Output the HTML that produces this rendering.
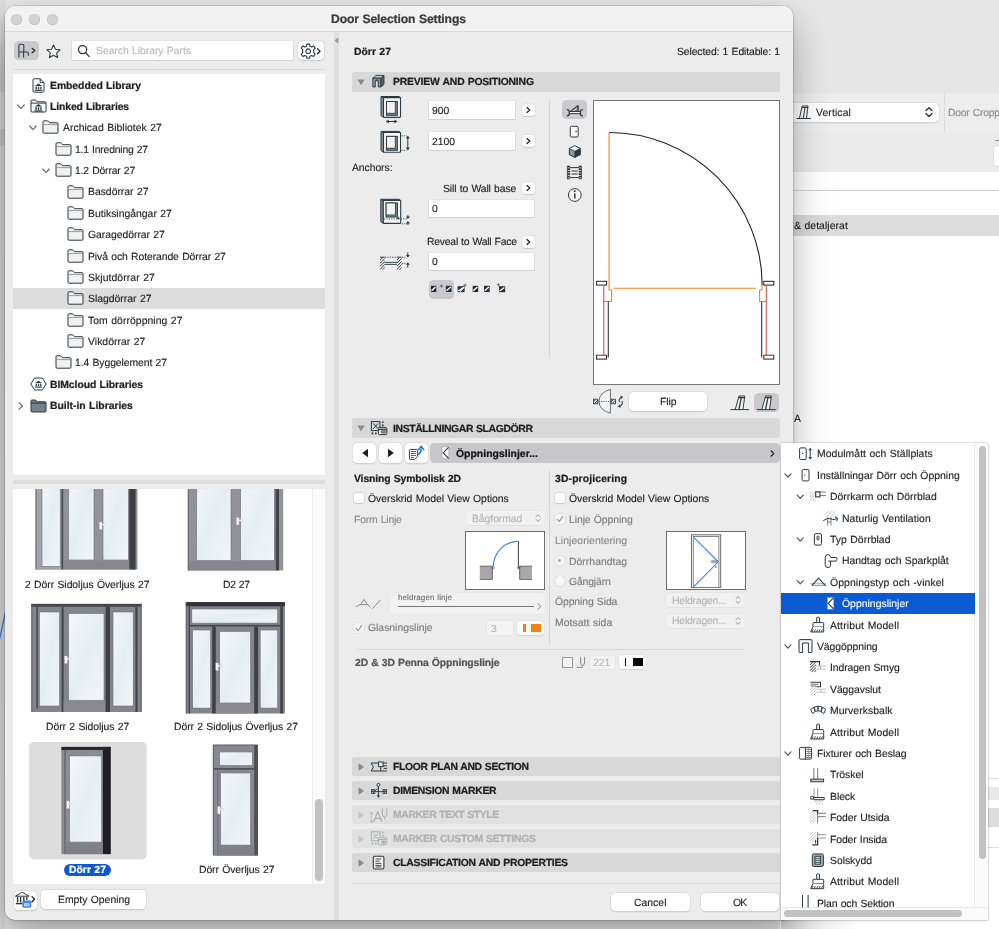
<!DOCTYPE html>
<html lang="sv">
<head>
<meta charset="utf-8">
<title>Door Selection Settings</title>
<style>
html,body{margin:0;padding:0;}
body{width:999px;height:929px;overflow:hidden;position:relative;background:#e5e5e5;-webkit-font-smoothing:antialiased;text-rendering:geometricPrecision;
 font-family:"Liberation Sans","DejaVu Sans",sans-serif;font-size:10.4px;color:#222;}
.a{position:absolute;}
.t{position:absolute;white-space:nowrap;line-height:14px;height:14px;will-change:transform;-webkit-text-stroke:.13px currentColor;}
.b{font-weight:bold;-webkit-text-stroke:.22px currentColor;}
svg{position:absolute;overflow:visible;}
.tl{position:absolute;width:11px;height:11px;border-radius:6px;background:#d3d3d3;box-shadow:inset 0 0 0 .5px #bdbdbd;top:13.5px;}
.sec{position:absolute;left:352px;width:427.5px;height:19.5px;background:#d8d8d8;border-radius:2.5px;}
.sec2{background:#e1e1e1;}
.fld{position:absolute;background:#fff;box-shadow:0 0 0 .5px #dadada,0 .5px 0 .5px #c9c9c9;}
.btn{position:absolute;background:#fff;border-radius:4.5px;box-shadow:0 0 0 .5px #d2d2d2,0 .5px 1.5px rgba(0,0,0,.22);}
.sb{position:absolute;background:#fdfdfd;border-radius:4px;box-shadow:0 0 0 .5px #dcdcdc,0 .5px 1px rgba(0,0,0,.2);}
.cb{position:absolute;width:10px;height:10px;background:#fff;border-radius:2.5px;box-shadow:0 0 0 .5px #c4c4c4,0 .5px 1px rgba(0,0,0,.15);}
.cbd{background:#f4f4f4;box-shadow:0 0 0 .5px #d6d6d6;}
.dd{position:absolute;background:#f1f1f1;border-radius:4px;box-shadow:0 0 0 .5px #dfdfdf,0 .5px .5px rgba(0,0,0,.08);}
.pv{position:absolute;background:#fff;border:1px solid #777;box-sizing:border-box;}
</style>
</head>
<body>
<!-- background application -->
<div class="a" style="left:780.0px;top:0.0px;width:219.0px;height:93.0px;background:#e6e6e6"></div>
<div class="a" style="left:780.0px;top:93.0px;width:219.0px;height:39.0px;background:#ededed"></div>
<div class="a" style="left:780.0px;top:132.0px;width:219.0px;height:40.0px;background:#ebebeb"></div>
<div class="a" style="left:780.0px;top:172.0px;width:219.0px;height:757.0px;background:#fff"></div>
<div class="a" style="left:780.0px;top:190.0px;width:219.0px;height:1.0px;background:#d4d4d4"></div>
<div class="a" style="left:780.0px;top:215.0px;width:219.0px;height:21.0px;background:#dcdcdc"></div>
<div class="a" style="left:760.0px;top:102.5px;width:179.0px;height:19.0px;background:#fff;border-radius:5px;box-shadow:0 0 0 .5px #d9d9d9,0 .5px 1.5px rgba(0,0,0,.2)"></div>
<div class="a" style="left:944.0px;top:93.0px;width:1.0px;height:39.0px;background:#dcdcdc"></div>
<div class="t" style="left:816.0px;top:107.0px;letter-spacing:0.11px;color:#262626">Vertical</div>
<div class="t" style="left:948.0px;top:107.0px;letter-spacing:-0.23px;word-spacing:0.5px;color:#8c8c8c">Door Cropp</div>
<div class="t" style="left:794.0px;top:220.0px;letter-spacing:0.07px;word-spacing:0.5px;color:#1e1e1e">&amp; detaljerat</div>
<div class="t" style="left:793.5px;top:413.0px;letter-spacing:0.00px;color:#1e1e1e">A</div>
<svg style="left:924.0px;top:106.0px" width="10" height="12" viewBox="0 0 10 12"><path d="M2 4.6 L5 1.8 L8 4.6 M2 7.6 L5 10.4 L8 7.6" fill="none" stroke="#333" stroke-width="1.4" stroke-linecap="round" stroke-linejoin="round"/></svg>
<svg style="left:796.0px;top:103.0px" width="16" height="18" viewBox="0 0 16 18"><path d="M0.5 15.5 H15 M3.5 15 L6.2 3 H12 L10.5 15 M7.3 15 L9 4.5 M6 4.5 H11.8" fill="none" stroke="#2b3a42" stroke-width="1"/></svg>
<div class="a" style="left:995.0px;top:140.0px;width:4.0px;height:1.0px;background:#999"></div>
<div class="a" style="left:994.0px;top:146.0px;width:5.0px;height:20.0px;background:#fff;border-radius:4px 0 0 4px;box-shadow:0 0 0 .5px #d0d0d0"></div>
<div class="a" style="left:988.0px;top:778.0px;width:11.0px;height:1.0px;background:#dedede"></div>
<div class="a" style="left:988.0px;top:786.5px;width:11.0px;height:13.0px;background:#e9e9e9"></div>
<div class="a" style="left:988.0px;top:807.5px;width:11.0px;height:19.0px;background:#dcdcdc"></div>
<div class="a" style="left:988.0px;top:847.0px;width:11.0px;height:1.0px;background:#dedede"></div>
<div class="a" style="left:0.0px;top:0.0px;width:5.0px;height:929.0px;background:linear-gradient(#dedede 0,#d2d2d2 40px,#c6c6c6 70px,#c6c6c6 92px,#d3d3d3 92px,#d3d3d3 129px,#c2c2c2 129px,#c2c2c2 146px,#d4d4d4 146px,#d8d8d8 600px,#dadada 929px)"></div>
<svg style="left:0.0px;top:608.0px" width="6" height="36" viewBox="0 0 6 36"><path d="M-1 34 L5.5 4" stroke="#3d7fd6" stroke-width="1.3" fill="none"/></svg>
<!-- dialog window -->
<div class="a" style="left:5.0px;top:6.0px;width:788.0px;height:914.0px;background:#ececec;border-radius:10px;box-shadow:0 0 0 .5px rgba(0,0,0,.22),0 17px 38px 0 rgba(0,0,0,.30),0 2px 6px rgba(0,0,0,.10)"></div>
<div class="a" style="left:5.0px;top:6.0px;width:788.0px;height:25.5px;background:#f2f2f2;border-radius:10px 10px 0 0;border-bottom:1px solid #d9d9d9;box-sizing:border-box"></div>
<div class="tl" style="left:11.2px"></div>
<div class="tl" style="left:28.9px"></div>
<div class="tl" style="left:46.7px"></div>
<div class="t b" style="left:331.0px;top:11.0px;font-size:12.2px;line-height:16px;height:16px;letter-spacing:-0.16px;word-spacing:0.5px;color:#3a3a3a">Door Selection Settings</div>
<div class="a" style="left:333.5px;top:31.5px;width:5.8px;height:888.5px;background:#dfdfdf"></div>
<svg style="left:334.2px;top:36.8px" width="5" height="7" viewBox="0 0 5 7"><path d="M4.4 0.3 L0.4 3.5 L4.4 6.7 Z" fill="#9c9c9c"/></svg>
<!-- left pane -->
<div class="a" style="left:14.0px;top:40.5px;width:25.0px;height:19.5px;background:#cacace;border-radius:4.5px"></div>
<svg style="left:0.0px;top:0.0px" width="40" height="62" viewBox="0 0 40 62"><path d="M18.9 57.6 V45.6 Q18.9 44.2 20.3 44.2 H22.4 Q23.8 44.2 23.8 45.6 V52 H27.2 Q28.3 52 28.3 53.1 V55.8 M18.9 52 H23.8 M23.6 52.2 V57.6" fill="none" stroke="#2b3a42" stroke-width="1.1" stroke-linejoin="round"/><path d="M32.2 48.4 L34.8 50.6 L32.2 52.8" fill="none" stroke="#222" stroke-width="1.3" stroke-linecap="round" stroke-linejoin="round"/></svg>
<svg style="left:46.0px;top:43.5px" width="15" height="15" viewBox="0 0 15 15"><path d="M7.5 1 L9.45 5.3 L14.1 5.8 L10.6 8.95 L11.6 13.55 L7.5 11.2 L3.4 13.55 L4.4 8.95 L.9 5.8 L5.55 5.3 Z" fill="#fff" stroke="#2b3a42" stroke-width="1.1" stroke-linejoin="round"/></svg>
<div class="a" style="left:72.0px;top:41.0px;width:221.0px;height:18.5px;background:#fff;border-radius:1px;box-shadow:0 0 0 .5px #dcdcdc,0 .5px 0 .5px #c8c8c8"></div>
<svg style="left:77.0px;top:43.5px" width="14" height="14" viewBox="0 0 14 14"><circle cx="5.6" cy="5.6" r="4.1" fill="none" stroke="#333" stroke-width="1.25"/><path d="M8.6 8.8 L12 12.4" stroke="#333" stroke-width="1.35" stroke-linecap="round"/></svg>
<div class="t" style="left:96.0px;top:45.0px;letter-spacing:-0.04px;word-spacing:0.5px;color:#b9b9b9">Search Library Parts</div>
<div class="a" style="left:298.0px;top:41.0px;width:26.0px;height:18.5px;background:#fdfdfd;border-radius:4.5px;box-shadow:0 0 0 .5px #d4d4d4,0 .5px 1.5px rgba(0,0,0,.2)"></div>
<svg style="left:300.0px;top:41.5px" width="22" height="18" viewBox="0 0 22 18"><g transform="translate(8.2 9.2) scale(1.18)" fill="none" stroke="#2b3a42" stroke-width=".95"><circle r="2" /><path d="M-1.1 -6 H1.1 L1.5 -4.3 L2.9 -3.6 L4.5 -4.5 L5.9 -2.6 L4.7 -1.3 V1.3 L5.9 2.6 L4.5 4.5 L2.9 3.6 L1.5 4.3 L1.1 6 H-1.1 L-1.5 4.3 L-2.9 3.6 L-4.5 4.5 L-5.9 2.6 L-4.7 1.3 V-1.3 L-5.9 -2.6 L-4.5 -4.5 L-2.9 -3.6 L-1.5 -4.3 Z" stroke-linejoin="round"/></g><path d="M17.4 6.6 L20 9.2 L17.4 11.8" fill="none" stroke="#222" stroke-width="1.3" stroke-linecap="round" stroke-linejoin="round"/></svg>
<div class="a" style="left:13.0px;top:68.5px;width:312.0px;height:1.0px;background:#dadada"></div>
<div class="a" style="left:13.0px;top:74.0px;width:312.0px;height:401.0px;background:#fff"></div>
<svg style="left:32.0px;top:77.5px" width="13" height="15" viewBox="0 0 13 15"><path d="M1 2 Q1 .8 2.2 .8 H8.2 L12 4.6 V13 Q12 14.2 10.8 14.2 H2.2 Q1 14.2 1 13 Z M8.2 .8 V4.6 H12" fill="#fff" stroke="#2b3a42" stroke-width="1" stroke-linejoin="round"/><g transform="translate(6.5 9.2) scale(1.02)" fill="#2b3a42"><path d="M-3.6 -1.2 L0 -3.6 L3.6 -1.2 Z"/><rect x="-3" y="-.6" width="1.3" height="2.6"/><rect x="-.65" y="-.6" width="1.3" height="2.6"/><rect x="1.7" y="-.6" width="1.3" height="2.6"/><rect x="-3.8" y="2.4" width="7.6" height="1.2"/></g></svg>
<div class="t b" style="left:50.0px;top:80.0px;letter-spacing:-0.05px;word-spacing:0.5px;color:#1d1d1d">Embedded Library</div>
<svg style="left:29.5px;top:99.4px" width="17" height="14" viewBox="0 0 17 14"><path d="M1 12 V2 Q1 1 2 1 H5.6 L7 2.8 H15 Q16 2.8 16 3.8 V12 Q16 13 15 13 H2 Q1 13 1 12 Z M1 4.1 H16" fill="#fff" stroke="#2b3a42" stroke-width="1"/><g transform="translate(8.5 8.8) scale(1.05)" fill="#2b3a42"><path d="M-3.6 -1.2 L0 -3.6 L3.6 -1.2 Z"/><rect x="-3" y="-.6" width="1.3" height="2.6"/><rect x="-.65" y="-.6" width="1.3" height="2.6"/><rect x="1.7" y="-.6" width="1.3" height="2.6"/><rect x="-3.8" y="2.4" width="7.6" height="1.2"/></g></svg>
<svg style="left:16.5px;top:103.9px" width="8" height="6" viewBox="0 0 8 6"><path d="M0.8 1 L4 4.6 L7.2 1" fill="none" stroke="#6d6d6d" stroke-width="1.2" stroke-linecap="round" stroke-linejoin="round"/></svg>
<div class="t b" style="left:50.0px;top:101.0px;letter-spacing:-0.11px;word-spacing:0.5px;color:#1d1d1d">Linked Libraries</div>
<svg style="left:42.0px;top:120.3px" width="17" height="14" viewBox="0 0 17 14"><path d="M1 12.2 V1.8 Q1 .8 2 .8 H5.4 Q6.2 .8 6.8 1.6 L7.6 2.7 H15 Q16 2.7 16 3.7 V12.2 Q16 13.2 15 13.2 H2 Q1 13.2 1 12.2 Z" fill="#f1f1f1" stroke="#2b3a42" stroke-width="1"/><path d="M1.4 4.6 H15.6" stroke="#7d878d" stroke-width=".8"/></svg>
<svg style="left:29.0px;top:125.2px" width="8" height="6" viewBox="0 0 8 6"><path d="M0.8 1 L4 4.6 L7.2 1" fill="none" stroke="#6d6d6d" stroke-width="1.2" stroke-linecap="round" stroke-linejoin="round"/></svg>
<div class="t" style="left:62.5px;top:122.0px;letter-spacing:0.04px;word-spacing:0.5px;color:#1d1d1d">Archicad Bibliotek 27</div>
<svg style="left:54.5px;top:141.7px" width="17" height="14" viewBox="0 0 17 14"><path d="M1 12.2 V1.8 Q1 .8 2 .8 H5.4 Q6.2 .8 6.8 1.6 L7.6 2.7 H15 Q16 2.7 16 3.7 V12.2 Q16 13.2 15 13.2 H2 Q1 13.2 1 12.2 Z" fill="#f1f1f1" stroke="#2b3a42" stroke-width="1"/><path d="M1.4 4.6 H15.6" stroke="#7d878d" stroke-width=".8"/></svg>
<div class="t" style="left:75.0px;top:144.0px;letter-spacing:-0.20px;word-spacing:0.5px;color:#1d1d1d">1.1 Inredning 27</div>
<svg style="left:54.5px;top:163.1px" width="17" height="14" viewBox="0 0 17 14"><path d="M1 12.2 V1.8 Q1 .8 2 .8 H5.4 Q6.2 .8 6.8 1.6 L7.6 2.7 H15 Q16 2.7 16 3.7 V12.2 Q16 13.2 15 13.2 H2 Q1 13.2 1 12.2 Z" fill="#f1f1f1" stroke="#2b3a42" stroke-width="1"/><path d="M1.4 4.6 H15.6" stroke="#7d878d" stroke-width=".8"/></svg>
<svg style="left:41.5px;top:168.0px" width="8" height="6" viewBox="0 0 8 6"><path d="M0.8 1 L4 4.6 L7.2 1" fill="none" stroke="#6d6d6d" stroke-width="1.2" stroke-linecap="round" stroke-linejoin="round"/></svg>
<div class="t" style="left:75.0px;top:165.0px;letter-spacing:-0.17px;word-spacing:0.5px;color:#1d1d1d">1.2 Dörrar 27</div>
<svg style="left:67.0px;top:184.5px" width="17" height="14" viewBox="0 0 17 14"><path d="M1 12.2 V1.8 Q1 .8 2 .8 H5.4 Q6.2 .8 6.8 1.6 L7.6 2.7 H15 Q16 2.7 16 3.7 V12.2 Q16 13.2 15 13.2 H2 Q1 13.2 1 12.2 Z" fill="#f1f1f1" stroke="#2b3a42" stroke-width="1"/><path d="M1.4 4.6 H15.6" stroke="#7d878d" stroke-width=".8"/></svg>
<div class="t" style="left:87.5px;top:186.0px;letter-spacing:-0.01px;word-spacing:0.5px;color:#1d1d1d">Basdörrar 27</div>
<svg style="left:67.0px;top:205.8px" width="17" height="14" viewBox="0 0 17 14"><path d="M1 12.2 V1.8 Q1 .8 2 .8 H5.4 Q6.2 .8 6.8 1.6 L7.6 2.7 H15 Q16 2.7 16 3.7 V12.2 Q16 13.2 15 13.2 H2 Q1 13.2 1 12.2 Z" fill="#f1f1f1" stroke="#2b3a42" stroke-width="1"/><path d="M1.4 4.6 H15.6" stroke="#7d878d" stroke-width=".8"/></svg>
<div class="t" style="left:87.5px;top:208.0px;letter-spacing:0.01px;word-spacing:0.5px;color:#1d1d1d">Butiksingångar 27</div>
<svg style="left:67.0px;top:227.2px" width="17" height="14" viewBox="0 0 17 14"><path d="M1 12.2 V1.8 Q1 .8 2 .8 H5.4 Q6.2 .8 6.8 1.6 L7.6 2.7 H15 Q16 2.7 16 3.7 V12.2 Q16 13.2 15 13.2 H2 Q1 13.2 1 12.2 Z" fill="#f1f1f1" stroke="#2b3a42" stroke-width="1"/><path d="M1.4 4.6 H15.6" stroke="#7d878d" stroke-width=".8"/></svg>
<div class="t" style="left:87.5px;top:229.0px;letter-spacing:-0.03px;word-spacing:0.5px;color:#1d1d1d">Garagedörrar 27</div>
<svg style="left:67.0px;top:248.6px" width="17" height="14" viewBox="0 0 17 14"><path d="M1 12.2 V1.8 Q1 .8 2 .8 H5.4 Q6.2 .8 6.8 1.6 L7.6 2.7 H15 Q16 2.7 16 3.7 V12.2 Q16 13.2 15 13.2 H2 Q1 13.2 1 12.2 Z" fill="#f1f1f1" stroke="#2b3a42" stroke-width="1"/><path d="M1.4 4.6 H15.6" stroke="#7d878d" stroke-width=".8"/></svg>
<div class="t" style="left:87.5px;top:251.0px;letter-spacing:-0.08px;word-spacing:0.5px;color:#1d1d1d">Pivå och Roterande Dörrar 27</div>
<svg style="left:67.0px;top:269.9px" width="17" height="14" viewBox="0 0 17 14"><path d="M1 12.2 V1.8 Q1 .8 2 .8 H5.4 Q6.2 .8 6.8 1.6 L7.6 2.7 H15 Q16 2.7 16 3.7 V12.2 Q16 13.2 15 13.2 H2 Q1 13.2 1 12.2 Z" fill="#f1f1f1" stroke="#2b3a42" stroke-width="1"/><path d="M1.4 4.6 H15.6" stroke="#7d878d" stroke-width=".8"/></svg>
<div class="t" style="left:87.5px;top:272.0px;letter-spacing:0.08px;word-spacing:0.5px;color:#1d1d1d">Skjutdörrar 27</div>
<div class="a" style="left:13.0px;top:288.0px;width:312.0px;height:21.4px;background:#dcdcdc"></div>
<svg style="left:67.0px;top:291.3px" width="17" height="14" viewBox="0 0 17 14"><path d="M1 12.2 V1.8 Q1 .8 2 .8 H5.4 Q6.2 .8 6.8 1.6 L7.6 2.7 H15 Q16 2.7 16 3.7 V12.2 Q16 13.2 15 13.2 H2 Q1 13.2 1 12.2 Z" fill="#f1f1f1" stroke="#2b3a42" stroke-width="1"/><path d="M1.4 4.6 H15.6" stroke="#7d878d" stroke-width=".8"/></svg>
<div class="t" style="left:87.5px;top:293.0px;letter-spacing:-0.00px;word-spacing:0.5px;color:#1d1d1d">Slagdörrar 27</div>
<svg style="left:67.0px;top:312.7px" width="17" height="14" viewBox="0 0 17 14"><path d="M1 12.2 V1.8 Q1 .8 2 .8 H5.4 Q6.2 .8 6.8 1.6 L7.6 2.7 H15 Q16 2.7 16 3.7 V12.2 Q16 13.2 15 13.2 H2 Q1 13.2 1 12.2 Z" fill="#f1f1f1" stroke="#2b3a42" stroke-width="1"/><path d="M1.4 4.6 H15.6" stroke="#7d878d" stroke-width=".8"/></svg>
<div class="t" style="left:87.5px;top:315.0px;letter-spacing:0.06px;word-spacing:0.5px;color:#1d1d1d">Tom dörröppning 27</div>
<svg style="left:67.0px;top:334.0px" width="17" height="14" viewBox="0 0 17 14"><path d="M1 12.2 V1.8 Q1 .8 2 .8 H5.4 Q6.2 .8 6.8 1.6 L7.6 2.7 H15 Q16 2.7 16 3.7 V12.2 Q16 13.2 15 13.2 H2 Q1 13.2 1 12.2 Z" fill="#f1f1f1" stroke="#2b3a42" stroke-width="1"/><path d="M1.4 4.6 H15.6" stroke="#7d878d" stroke-width=".8"/></svg>
<div class="t" style="left:87.5px;top:336.0px;letter-spacing:0.04px;word-spacing:0.5px;color:#1d1d1d">Vikdörrar 27</div>
<svg style="left:54.5px;top:355.4px" width="17" height="14" viewBox="0 0 17 14"><path d="M1 12.2 V1.8 Q1 .8 2 .8 H5.4 Q6.2 .8 6.8 1.6 L7.6 2.7 H15 Q16 2.7 16 3.7 V12.2 Q16 13.2 15 13.2 H2 Q1 13.2 1 12.2 Z" fill="#f1f1f1" stroke="#2b3a42" stroke-width="1"/><path d="M1.4 4.6 H15.6" stroke="#7d878d" stroke-width=".8"/></svg>
<div class="t" style="left:75.0px;top:357.0px;letter-spacing:-0.08px;word-spacing:0.5px;color:#1d1d1d">1.4 Byggelement 27</div>
<svg style="left:29.5px;top:377.2px" width="17" height="14" viewBox="0 0 17 14"><path d="M4.6 1 H12.4 L16.2 7 L12.4 13 H4.6 L.8 7 Z" fill="#fff" stroke="#2b3a42" stroke-width="1" stroke-linejoin="round"/><g transform="translate(8.5 7.2) scale(0.95)" fill="#2b3a42"><path d="M-3.6 -1.2 L0 -3.6 L3.6 -1.2 Z"/><rect x="-3" y="-.6" width="1.3" height="2.6"/><rect x="-.65" y="-.6" width="1.3" height="2.6"/><rect x="1.7" y="-.6" width="1.3" height="2.6"/><rect x="-3.8" y="2.4" width="7.6" height="1.2"/></g></svg>
<div class="t b" style="left:50.0px;top:379.0px;letter-spacing:-0.06px;word-spacing:0.5px;color:#1d1d1d">BIMcloud Libraries</div>
<svg style="left:29.5px;top:398.6px" width="17" height="14" viewBox="0 0 17 14"><path d="M1 12 V2 Q1 1 2 1 H5.6 L7 2.8 H15 Q16 2.8 16 3.8 V12 Q16 13 15 13 H2 Q1 13 1 12 Z" fill="#77828a" stroke="#2b3a42" stroke-width="1"/><path d="M1 4.1 H16" stroke="#2b3a42" stroke-width="1"/></svg>
<svg style="left:18.0px;top:401.6px" width="6" height="8" viewBox="0 0 6 8"><path d="M1 0.8 L4.6 4 L1 7.2" fill="none" stroke="#6d6d6d" stroke-width="1.2" stroke-linecap="round" stroke-linejoin="round"/></svg>
<div class="t b" style="left:50.0px;top:400.0px;letter-spacing:-0.01px;word-spacing:0.5px;color:#1d1d1d">Built-in Libraries</div>
<div class="a" style="left:13.0px;top:479.5px;width:312.0px;height:4.5px;background:#dddddd"></div>
<div class="a" style="left:13.0px;top:488.5px;width:312.0px;height:395.0px;background:#fff"></div>
<div class="a" style="left:312.0px;top:488.5px;width:1.0px;height:395.0px;background:#ececec"></div>
<div class="a" style="left:313.0px;top:488.5px;width:12.0px;height:395.0px;background:#fafafa"></div>
<div class="a" style="left:314.5px;top:798.5px;width:8.0px;height:82.5px;background:#c2c2c2;border-radius:4px"></div>
<!-- thumbnails -->
<svg width="0" height="0" style="left:0;top:0"><defs>
<linearGradient id="gl" x1="0" y1="0" x2="1" y2="1"><stop offset="0" stop-color="#f4f7f9"/><stop offset=".5" stop-color="#e6edf1"/><stop offset="1" stop-color="#f1f5f7"/></linearGradient>
<linearGradient id="fr" x1="0" y1="0" x2="1" y2="0"><stop offset="0" stop-color="#8f8f97"/><stop offset="1" stop-color="#7d7d86"/></linearGradient>
</defs></svg>
<div class="a" style="left:13px;top:488.5px;width:299px;height:395px;overflow:hidden"><svg style="left:0;top:0" width="299" height="395" viewBox="0 0 299 395"><rect x="22.6" y="-18.5" width="101.9" height="99.0" fill="#92929a"/><rect x="22.6" y="-18.5" width="26.4" height="99.0" fill="#a2a2aa"/><rect x="116.2" y="-18.5" width="6.4" height="99.0" fill="#3e3e45"/><rect x="22.6" y="-18.5" width="1.0" height="99.0" fill="#6e6e76"/><rect x="29.0" y="-18.5" width="18.2" height="96.0" fill="url(#gl)" stroke="#6f6f78" stroke-width=".6"/><rect x="48.4" y="-18.5" width="1.8" height="99.0" fill="#4a4a51"/><rect x="55.6" y="-18.5" width="25.4" height="89.5" fill="url(#gl)" stroke="#6f6f78" stroke-width=".6"/><rect x="90.0" y="-18.5" width="25.4" height="89.5" fill="url(#gl)" stroke="#6f6f78" stroke-width=".6"/><rect x="50.2" y="71.5" width="66.0" height="9.0" fill="#86868e"/><rect x="86.4" y="33.0" width="2.6" height="7.4" fill="#fff" stroke="#b4b4b8" stroke-width=".4"/><rect x="88.0" y="35.0" width="4.6" height="1.5" fill="#f2f2f2" stroke="#c2c2c6" stroke-width=".3"/><rect x="174.8" y="-18.5" width="95.4" height="100.0" fill="#92929a"/><rect x="262.6" y="-18.5" width="3.4" height="100.0" fill="#44444b"/><rect x="174.8" y="-18.5" width="1.2" height="100.0" fill="#6e6e76"/><rect x="183.7" y="-18.5" width="34.3" height="90.0" fill="url(#gl)" stroke="#6f6f78" stroke-width=".6"/><rect x="227.6" y="-18.5" width="33.7" height="90.0" fill="url(#gl)" stroke="#6f6f78" stroke-width=".6"/><rect x="176.0" y="72.1" width="86.6" height="9.4" fill="#86868e"/><rect x="223.4" y="28.5" width="2.6" height="7.4" fill="#fff" stroke="#b4b4b8" stroke-width=".4"/><rect x="225.0" y="30.5" width="4.6" height="1.5" fill="#f2f2f2" stroke="#c2c2c6" stroke-width=".3"/><rect x="18.4" y="114.9" width="110.2" height="108.1" fill="#84848c"/><rect x="18.4" y="114.9" width="110.2" height="2.8" fill="#45454c"/><rect x="18.4" y="114.9" width="1.0" height="108.1" fill="#5e5e66"/><rect x="23.4" y="117.7" width="1.4" height="101.8" fill="#45454c"/><rect x="122.4" y="117.7" width="2.2" height="105.3" fill="#45454c"/><rect x="127.6" y="114.9" width="1.0" height="108.1" fill="#5e5e66"/><rect x="26.5" y="123.0" width="20.1" height="94.0" fill="url(#gl)" stroke="#6f6f78" stroke-width=".6"/><rect x="48.6" y="117.7" width="2.0" height="105.3" fill="#45454c"/><rect x="55.6" y="124.5" width="35.4" height="87.0" fill="url(#gl)" stroke="#6f6f78" stroke-width=".6"/><rect x="50.6" y="212.1" width="42.0" height="10.9" fill="#8a8a92"/><rect x="92.6" y="117.7" width="4.4" height="105.3" fill="#3e3e45"/><rect x="100.0" y="123.0" width="20.2" height="94.0" fill="url(#gl)" stroke="#6f6f78" stroke-width=".6"/><rect x="51.6" y="167.0" width="2.6" height="7.4" fill="#fff" stroke="#b4b4b8" stroke-width=".4"/><rect x="53.2" y="169.0" width="4.6" height="1.5" fill="#f2f2f2" stroke="#c2c2c6" stroke-width=".3"/><rect x="172.8" y="113.1" width="99.1" height="111.4" fill="#84848c"/><rect x="172.8" y="113.1" width="99.1" height="4.2" fill="#34343a"/><rect x="172.8" y="113.1" width="1.0" height="111.4" fill="#5e5e66"/><rect x="175.6" y="117.3" width="1.4" height="107.2" fill="#45454c"/><rect x="267.2" y="117.3" width="2.8" height="107.2" fill="#45454c"/><rect x="178.8" y="120.0" width="85.9" height="14.1" fill="url(#gl)" stroke="#6f6f78" stroke-width=".6"/><rect x="177.0" y="135.9" width="90.2" height="1.6" fill="#45454c"/><rect x="179.7" y="141.0" width="18.0" height="78.1" fill="url(#gl)" stroke="#6f6f78" stroke-width=".6"/><rect x="199.2" y="137.5" width="3.6" height="87.0" fill="#3e3e45"/><rect x="206.7" y="142.5" width="30.9" height="71.5" fill="url(#gl)" stroke="#6f6f78" stroke-width=".6"/><rect x="202.8" y="214.5" width="38.4" height="10.0" fill="#8a8a92"/><rect x="241.2" y="137.5" width="3.8" height="87.0" fill="#3e3e45"/><rect x="247.2" y="141.0" width="17.5" height="78.1" fill="url(#gl)" stroke="#6f6f78" stroke-width=".6"/><rect x="202.8" y="174.0" width="2.6" height="7.4" fill="#fff" stroke="#b4b4b8" stroke-width=".4"/><rect x="204.4" y="176.0" width="4.6" height="1.5" fill="#f2f2f2" stroke="#c2c2c6" stroke-width=".3"/><rect x="16.0" y="253.1" width="117.7" height="117.4" rx="5" fill="#dddddd"/><rect x="48.4" y="257.9" width="49.3" height="107.2" fill="#8a8a92"/><rect x="89.6" y="257.9" width="8.1" height="107.2" fill="#1e1e23"/><rect x="48.4" y="257.9" width="49.3" height="3.2" fill="#26262b"/><rect x="51.6" y="261.1" width="1.0" height="104.0" fill="#4a4a50"/><rect x="52.6" y="261.1" width="37.0" height="104.0" fill="#8c8c94"/><rect x="56.5" y="266.9" width="32.2" height="86.2" fill="url(#gl)" stroke="#6f6f78" stroke-width=".6"/><rect x="52.6" y="353.7" width="37.0" height="11.4" fill="#7f7f87"/><rect x="53.6" y="312.0" width="2.6" height="7.4" fill="#fff" stroke="#b4b4b8" stroke-width=".4"/><rect x="55.2" y="314.0" width="4.6" height="1.5" fill="#f2f2f2" stroke="#c2c2c6" stroke-width=".3"/><rect x="199.8" y="255.5" width="45.0" height="111.0" fill="#5a5a61"/><rect x="200.8" y="256.5" width="40.6" height="110.0" fill="#888890"/><rect x="241.4" y="256.5" width="3.4" height="110.0" fill="#4c4c53"/><rect x="206.7" y="263.0" width="32.7" height="13.5" fill="url(#gl)" stroke="#6f6f78" stroke-width=".6"/><rect x="200.8" y="279.1" width="40.6" height="1.6" fill="#4c4c53"/><rect x="204.4" y="281.9" width="1.0" height="84.6" fill="#6a6a72"/><rect x="207.6" y="284.0" width="30.0" height="72.1" fill="url(#gl)" stroke="#6f6f78" stroke-width=".6"/><rect x="205.4" y="356.7" width="36.0" height="9.8" fill="#7f7f87"/><rect x="204.6" y="317.5" width="2.6" height="7.4" fill="#fff" stroke="#b4b4b8" stroke-width=".4"/><rect x="206.2" y="319.5" width="4.6" height="1.5" fill="#f2f2f2" stroke="#c2c2c6" stroke-width=".3"/></svg></div>
<div class="t" style="left:25.4px;top:579.0px;letter-spacing:-0.04px;word-spacing:0.5px;color:#1d1d1d">2 Dörr Sidoljus Överljus 27</div>
<div class="t" style="left:223.0px;top:579.0px;letter-spacing:-0.33px;word-spacing:0.5px;color:#1d1d1d">D2 27</div>
<div class="t" style="left:45.9px;top:721.0px;letter-spacing:-0.05px;word-spacing:0.5px;color:#1d1d1d">Dörr 2 Sidoljus 27</div>
<div class="t" style="left:174.3px;top:721.0px;letter-spacing:-0.06px;word-spacing:0.5px;color:#1d1d1d">Dörr 2 Sidoljus Överljus 27</div>
<div class="a" style="left:64.0px;top:863.5px;width:47.0px;height:12.5px;background:#0a5ad4;border-radius:6.5px"></div>
<div class="t b" style="left:69.0px;top:864.0px;letter-spacing:0.01px;word-spacing:0.5px;color:#fff">Dörr 27</div>
<div class="t" style="left:198.5px;top:864.0px;letter-spacing:-0.08px;word-spacing:0.5px;color:#1d1d1d">Dörr Överljus 27</div>
<div class="a" style="left:14.0px;top:890.5px;width:22.5px;height:19.0px;background:#fdfdfd;border-radius:4.5px;box-shadow:0 0 0 .5px #d4d4d4,0 .5px 1.5px rgba(0,0,0,.2)"></div>
<div class="a" style="left:41.0px;top:890.0px;width:105.0px;height:18.5px;background:#fff;border-radius:4.5px;box-shadow:0 0 0 .5px #d4d4d4,0 .5px 1.5px rgba(0,0,0,.2)"></div>
<div class="t" style="left:57.5px;top:894.0px;letter-spacing:-0.01px;word-spacing:0.5px;color:#222">Empty Opening</div>
<!-- right pane -->
<div class="t b" style="left:354.0px;top:46.0px;letter-spacing:0.01px;word-spacing:0.5px;color:#1d1d1d">Dörr 27</div>
<div class="t" style="left:677.0px;top:46.0px;letter-spacing:-0.11px;word-spacing:0.5px;color:#1d1d1d">Selected: 1 Editable: 1</div>
<div class="sec" style="top:72px"></div>
<svg style="left:357.0px;top:78.5px" width="8" height="7" viewBox="0 0 8 7"><path d="M0.3 .5 H7.7 L4 6.3 Z" fill="#8c8c8c"/></svg>
<div class="t b" style="left:393.4px;top:76.0px;letter-spacing:-0.18px;word-spacing:0.5px;color:#1d1d1d">PREVIEW AND POSITIONING</div>
<div class="fld" style="left:428.5px;top:101px;width:86.5px;height:17.5px"></div>
<div class="t" style="left:431.6px;top:105.0px;letter-spacing:0.00px;color:#1d1d1d">900</div>
<div class="a" style="left:521.5px;top:104.0px;width:13.0px;height:12.0px;background:#fff;border-radius:4px;box-shadow:0 0 0 .5px #dedede,0 .5px 1px rgba(0,0,0,.22)"></div>
<svg style="left:526.0px;top:107.0px" width="5" height="6" viewBox="0 0 5 6"><path d="M1 .6 L3.7 3 L1 5.4" fill="none" stroke="#222" stroke-width="1.3" stroke-linecap="round" stroke-linejoin="round"/></svg>
<div class="fld" style="left:428.5px;top:132px;width:86.5px;height:17.5px"></div>
<div class="t" style="left:431.6px;top:136.0px;letter-spacing:0.00px;color:#1d1d1d">2100</div>
<div class="a" style="left:521.5px;top:135.0px;width:13.0px;height:12.0px;background:#fff;border-radius:4px;box-shadow:0 0 0 .5px #dedede,0 .5px 1px rgba(0,0,0,.22)"></div>
<svg style="left:526.0px;top:138.0px" width="5" height="6" viewBox="0 0 5 6"><path d="M1 .6 L3.7 3 L1 5.4" fill="none" stroke="#222" stroke-width="1.3" stroke-linecap="round" stroke-linejoin="round"/></svg>
<div class="t" style="left:352.3px;top:162.0px;letter-spacing:-0.07px;color:#2a2a2a">Anchors:</div>
<div class="t" style="left:443.3px;top:183.0px;letter-spacing:-0.11px;word-spacing:0.5px;color:#1d1d1d">Sill to Wall base</div>
<div class="a" style="left:521.5px;top:182.0px;width:13.0px;height:12.0px;background:#fff;border-radius:4px;box-shadow:0 0 0 .5px #dedede,0 .5px 1px rgba(0,0,0,.22)"></div>
<svg style="left:526.0px;top:185.0px" width="5" height="6" viewBox="0 0 5 6"><path d="M1 .6 L3.7 3 L1 5.4" fill="none" stroke="#222" stroke-width="1.3" stroke-linecap="round" stroke-linejoin="round"/></svg>
<div class="fld" style="left:428.5px;top:199.5px;width:105.5px;height:17.5px"></div>
<div class="t" style="left:431.6px;top:203.0px;letter-spacing:0.00px;color:#1d1d1d">0</div>
<div class="t" style="left:426.7px;top:236.0px;letter-spacing:-0.23px;word-spacing:0.5px;color:#1d1d1d">Reveal to Wall Face</div>
<div class="a" style="left:521.5px;top:235.5px;width:13.0px;height:12.0px;background:#fff;border-radius:4px;box-shadow:0 0 0 .5px #dedede,0 .5px 1px rgba(0,0,0,.22)"></div>
<svg style="left:526.0px;top:238.5px" width="5" height="6" viewBox="0 0 5 6"><path d="M1 .6 L3.7 3 L1 5.4" fill="none" stroke="#222" stroke-width="1.3" stroke-linecap="round" stroke-linejoin="round"/></svg>
<div class="fld" style="left:428.5px;top:252.7px;width:105.5px;height:17.5px"></div>
<div class="t" style="left:431.6px;top:256.0px;letter-spacing:0.00px;color:#1d1d1d">0</div>
<div class="a" style="left:428.5px;top:280.0px;width:25.2px;height:19.0px;background:#c9c9cd;border-radius:4.5px"></div>
<div class="a" style="left:549.2px;top:100.0px;width:1.0px;height:258.0px;background:#d6d6d6"></div>
<div class="a" style="left:562.0px;top:100.4px;width:25.3px;height:19.0px;background:#c9c9cd;border-radius:4.5px"></div>
<div class="pv" style="left:592.8px;top:99.6px;width:187px;height:285.2px"></div>
<svg style="left:0;top:0" width="999" height="929" viewBox="0 0 999 929"><path d="M609.25 132.5 A153 153 0 0 1 762.2 285" fill="none" stroke="#222" stroke-width="1.1"/><path d="M609.1 132.5 V290 H611.6 V301.5 H603.8" fill="none" stroke="#f58220" stroke-width="1.1"/><path d="M613.8 288.3 H756" fill="none" stroke="#f58220" stroke-width="1.1"/><path d="M762 284.5 V290 H759.6 V301.5 H766.4" fill="none" stroke="#f58220" stroke-width="1.1"/><rect x="596.6" y="281.3" width="10" height="3.8" fill="#fff" stroke="#222" stroke-width="1"/><rect x="763.8" y="281.3" width="10" height="3.8" fill="#fff" stroke="#222" stroke-width="1"/><path d="M608.3 301.5 V357.5" stroke="#333" stroke-width="1.1"/><path d="M761.7 301.5 V357.5" stroke="#333" stroke-width="1.1"/><path d="M603.8 285 V355.5" stroke="#d9534a" stroke-width="1.1"/><path d="M766.3 285 V355.5" stroke="#d9534a" stroke-width="1.1"/><rect x="596.6" y="355.3" width="10" height="3.8" fill="#fff" stroke="#222" stroke-width="1"/><rect x="763.8" y="355.3" width="10" height="3.8" fill="#fff" stroke="#222" stroke-width="1"/><path d="M597 355.4 H606.2" stroke="#d9534a" stroke-width="1.1"/><path d="M764.2 355.4 H773.4" stroke="#d9534a" stroke-width="1.1"/></svg>
<div class="a" style="left:629.0px;top:391.6px;width:78.4px;height:19.0px;background:#fff;border-radius:4.5px;box-shadow:0 0 0 .5px #d4d4d4,0 .5px 1.5px rgba(0,0,0,.2)"></div>
<div class="t" style="left:660.0px;top:396.0px;letter-spacing:-0.06px;color:#222">Flip</div>
<div class="a" style="left:754.0px;top:393.0px;width:24.6px;height:19.0px;background:#c9c9cd;border-radius:4.5px"></div>
<div class="sec" style="top:418.3px"></div>
<svg style="left:357.0px;top:424.5px" width="8" height="7" viewBox="0 0 8 7"><path d="M0.3 .5 H7.7 L4 6.3 Z" fill="#8c8c8c"/></svg>
<div class="t b" style="left:393.4px;top:423.0px;letter-spacing:-0.37px;word-spacing:0.5px;color:#1d1d1d">INSTÄLLNINGAR SLAGDÖRR</div>
<div class="a" style="left:352.7px;top:443.0px;width:23.3px;height:19.5px;background:#fff;border-radius:4.5px;box-shadow:0 0 0 .5px #d9d9d9,0 .5px 1.5px rgba(0,0,0,.2)"></div>
<div class="a" style="left:378.7px;top:443.0px;width:23.3px;height:19.5px;background:#fff;border-radius:4.5px;box-shadow:0 0 0 .5px #d9d9d9,0 .5px 1.5px rgba(0,0,0,.2)"></div>
<div class="a" style="left:405.0px;top:443.0px;width:23.0px;height:19.5px;background:#fff;border-radius:4.5px;box-shadow:0 0 0 .5px #d9d9d9,0 .5px 1.5px rgba(0,0,0,.2)"></div>
<svg style="left:360.5px;top:448.0px" width="8" height="10" viewBox="0 0 8 10"><path d="M7 .8 V9.2 L1.2 5 Z" fill="#1d1d1d"/></svg>
<svg style="left:386.5px;top:448.0px" width="8" height="10" viewBox="0 0 8 10"><path d="M1 .8 V9.2 L6.8 5 Z" fill="#1d1d1d"/></svg>
<div class="a" style="left:430.0px;top:443.0px;width:349.5px;height:19.5px;background:#c7c7cb;border-radius:4.5px"></div>
<div class="t b" style="left:455.6px;top:448.0px;letter-spacing:0.03px;color:#111">Öppningslinjer...</div>
<svg style="left:770.0px;top:449.5px" width="5" height="7" viewBox="0 0 5 7"><path d="M1 .8 L3.8 3.5 L1 6.2" fill="none" stroke="#222" stroke-width="1.2" stroke-linecap="round" stroke-linejoin="round"/></svg>
<div class="t b" style="left:354.3px;top:473.0px;letter-spacing:-0.12px;word-spacing:0.5px;color:#1d1d1d">Visning Symbolisk 2D</div>
<div class="cb" style="left:354.3px;top:493.4px"></div>
<div class="t" style="left:368.0px;top:493.0px;letter-spacing:-0.01px;word-spacing:0.5px;color:#1d1d1d">Överskrid Model View Options</div>
<div class="t" style="left:354.3px;top:514.0px;letter-spacing:-0.19px;word-spacing:0.5px;color:#8a8a8a">Form Linje</div>
<div class="dd" style="left:466px;top:511px;width:78.5px;height:14px"></div>
<div class="t" style="left:471.7px;top:513.0px;letter-spacing:-0.06px;color:#b4b4b4">Bågformad</div>
<svg style="left:534.5px;top:513.0px" width="6" height="10" viewBox="0 0 6 10"><path d="M1 3.6 L3 1.7 L5 3.6 M1 6.4 L3 8.3 L5 6.4" fill="none" stroke="#9a9a9a" stroke-width="1" stroke-linecap="round" stroke-linejoin="round"/></svg>
<div class="a" style="left:549.2px;top:470.0px;width:1.0px;height:175.0px;background:#d6d6d6"></div>
<div class="pv" style="left:465.3px;top:530.8px;width:80.2px;height:59px;border-color:#6c6c6c"></div>
<svg style="left:0;top:0" width="999" height="929" viewBox="0 0 999 929"><rect x="479.8" y="566.2" width="12.6" height="13" fill="#a9a9ad"/><path d="M479.8 566.2 H492.4 M479.8 579.4 H492.4 M492.3 566.2 V579.4" stroke="#5a5a5e" stroke-width=".9" fill="none"/><rect x="519.6" y="566.2" width="12.4" height="13" fill="#a9a9ad"/><path d="M519.6 566.2 H532 M519.6 579.4 H532 M519.7 566.2 V579.4" stroke="#5a5a5e" stroke-width=".9" fill="none"/><path d="M518.4 541 V568.5" stroke="#4a4a4e" stroke-width="1.1"/><path d="M493.2 567 A25.5 26 0 0 1 518.4 541.2" fill="none" stroke="#3b82f6" stroke-width="1.1"/><circle cx="493.3" cy="567.8" r="1.1" fill="none" stroke="#4a4a4e" stroke-width=".6"/><circle cx="518.8" cy="567.8" r="1.1" fill="none" stroke="#4a4a4e" stroke-width=".6"/></svg>
<div class="a" style="left:390.0px;top:593.0px;width:154.5px;height:21.4px;background:#f2f2f2;border-radius:4px;box-shadow:0 0 0 .5px #e4e4e4"></div>
<div class="t" style="left:397.6px;top:592.0px;font-size:8px;line-height:12px;height:12px;letter-spacing:0.10px;word-spacing:0.5px;color:#707070">heldragen linje</div>
<div class="a" style="left:397.6px;top:605.5px;width:136.4px;height:1.0px;background:#777"></div>
<svg style="left:536.5px;top:603.0px" width="5" height="7" viewBox="0 0 5 7"><path d="M1 .8 L3.8 3.5 L1 6.2" fill="none" stroke="#777" stroke-width="1" stroke-linecap="round" stroke-linejoin="round"/></svg>
<svg style="left:355.0px;top:598.0px" width="27" height="12" viewBox="0 0 27 12"><path d="M1 8.5 L5.5 6.5 L9 1.5 L12.5 6.5 M5 6.6 H12 Q14.5 6.8 15 9 M17.5 10.5 L25.5 2" fill="none" stroke="#8a8a8a" stroke-width="1" stroke-linecap="round" stroke-linejoin="round"/></svg>
<div class="cb cbd" style="left:354.3px;top:623px"></div>
<svg style="left:355.3px;top:624.0px" width="8" height="8" viewBox="0 0 8 8"><path d="M1.2 4.4 L3.2 6.6 L6.8 1.4" fill="none" stroke="#9a9a9a" stroke-width="1.1" stroke-linecap="round" stroke-linejoin="round"/></svg>
<div class="t" style="left:368.0px;top:622.0px;letter-spacing:-0.01px;color:#7c7c7c">Glasningslinje</div>
<div class="a" style="left:487.4px;top:621.3px;width:25.3px;height:13.7px;background:#f3f3f3;box-shadow:0 0 0 .5px #e2e2e2"></div>
<div class="t" style="left:491.0px;top:623.0px;letter-spacing:0.00px;color:#b8b8b8">3</div>
<div class="a" style="left:516.8px;top:620.5px;width:27.7px;height:14.5px;background:#fbfbfb;border-radius:4px;box-shadow:0 0 0 .5px #dedede,0 .5px 1px rgba(0,0,0,.15)"></div>
<div class="a" style="left:523.0px;top:624.0px;width:2.8px;height:8.0px;background:#f5820f"></div>
<div class="a" style="left:531.0px;top:624.0px;width:10.0px;height:8.0px;background:#f5820f"></div>
<div class="a" style="left:356.6px;top:649.2px;width:387.4px;height:1.0px;background:#d9d9d9"></div>
<div class="t b" style="left:355.0px;top:657.0px;letter-spacing:-0.14px;word-spacing:0.5px;color:#555">2D &amp; 3D Penna Öppningslinje</div>
<div class="t b" style="left:554.5px;top:473.0px;letter-spacing:0.13px;color:#1d1d1d">3D-projicering</div>
<div class="cb" style="left:554.5px;top:493.4px"></div>
<div class="t" style="left:568.8px;top:493.0px;letter-spacing:-0.03px;word-spacing:0.5px;color:#1d1d1d">Överskrid Model View Options</div>
<div class="cb cbd" style="left:554.5px;top:514.2px"></div>
<svg style="left:555.5px;top:515.2px" width="8" height="8" viewBox="0 0 8 8"><path d="M1.2 4.4 L3.2 6.6 L6.8 1.4" fill="none" stroke="#9a9a9a" stroke-width="1.1" stroke-linecap="round" stroke-linejoin="round"/></svg>
<div class="t" style="left:568.8px;top:514.0px;letter-spacing:-0.08px;word-spacing:0.5px;color:#7c7c7c">Linje Öppning</div>
<div class="t" style="left:554.5px;top:535.0px;letter-spacing:0.07px;color:#8a8a8a">Linjeorientering</div>
<div class="a" style="left:554.5px;top:555.8px;width:10.0px;height:10.0px;background:#f6f6f6;border-radius:5px;box-shadow:0 0 0 .5px #d4d4d4"></div>
<div class="a" style="left:557.8px;top:559.1px;width:3.4px;height:3.4px;background:#a8a8a8;border-radius:2px"></div>
<div class="t" style="left:568.8px;top:556.0px;letter-spacing:0.03px;color:#7c7c7c">Dörrhandtag</div>
<div class="a" style="left:554.5px;top:576.3px;width:10.0px;height:10.0px;background:#f6f6f6;border-radius:5px;box-shadow:0 0 0 .5px #d4d4d4"></div>
<div class="t" style="left:568.8px;top:576.0px;letter-spacing:-0.14px;color:#7c7c7c">Gångjärn</div>
<div class="t" style="left:554.5px;top:596.0px;letter-spacing:-0.10px;word-spacing:0.5px;color:#7c7c7c">Öppning Sida</div>
<div class="t" style="left:554.5px;top:617.0px;letter-spacing:0.06px;word-spacing:0.5px;color:#7c7c7c">Motsatt sida</div>
<div class="pv" style="left:665.6px;top:531px;width:80.4px;height:59.2px;border-color:#6c6c6c"></div>
<svg style="left:0;top:0" width="999" height="929" viewBox="0 0 999 929"><rect x="691.5" y="534.8" width="29.2" height="52.6" fill="#fff" stroke="#6a6a6e" stroke-width="1"/><rect x="693.3" y="536.6" width="25.6" height="50.8" fill="#fff" stroke="#6a6a6e" stroke-width=".8"/><path d="M693.8 537.3 L718.3 561.8 L693.8 586.6" fill="none" stroke="#3b82f6" stroke-width="1.1"/><rect x="711.2" y="560.4" width="6" height="2.4" rx="1" fill="#aaa" stroke="#777" stroke-width=".5"/><circle cx="715.8" cy="567" r="1" fill="#999"/></svg>
<div class="dd" style="left:666.3px;top:593.3px;width:78.7px;height:14px"></div>
<div class="t" style="left:672.0px;top:595.0px;letter-spacing:-0.20px;color:#b4b4b4">Heldragen...</div>
<svg style="left:735.0px;top:595.3px" width="6" height="10" viewBox="0 0 6 10"><path d="M1 3.6 L3 1.7 L5 3.6 M1 6.4 L3 8.3 L5 6.4" fill="none" stroke="#9a9a9a" stroke-width="1" stroke-linecap="round" stroke-linejoin="round"/></svg>
<div class="dd" style="left:666.3px;top:613.5px;width:78.7px;height:14px"></div>
<div class="t" style="left:672.0px;top:615.0px;letter-spacing:-0.20px;color:#b4b4b4">Heldragen...</div>
<svg style="left:735.0px;top:615.5px" width="6" height="10" viewBox="0 0 6 10"><path d="M1 3.6 L3 1.7 L5 3.6 M1 6.4 L3 8.3 L5 6.4" fill="none" stroke="#9a9a9a" stroke-width="1" stroke-linecap="round" stroke-linejoin="round"/></svg>
<div class="a" style="left:561.5px;top:656.5px;width:11.0px;height:11.0px;background:#f4f4f4;box-shadow:inset 0 0 0 1px #9a9a9a"></div>
<svg style="left:576.0px;top:656.0px" width="11" height="13" viewBox="0 0 11 13"><path d="M4.6 .8 V6 Q4.6 9.4 6.6 9.4 Q8.6 9.4 8.6 6 V.8 M6.6 9.4 V11.4 H.6" fill="none" stroke="#8a8a8a" stroke-width="1"/></svg>
<div class="a" style="left:589.5px;top:655.8px;width:25.5px;height:13.0px;background:#f3f3f3;box-shadow:0 0 0 .5px #e2e2e2"></div>
<div class="t" style="left:592.8px;top:657.0px;letter-spacing:0.00px;color:#b8b8b8">221</div>
<div class="a" style="left:618.8px;top:655.3px;width:27.0px;height:13.7px;background:#fbfbfb;border-radius:4px;box-shadow:0 0 0 .5px #dedede,0 .5px 1px rgba(0,0,0,.15)"></div>
<div class="a" style="left:624.6px;top:657.5px;width:1.4px;height:8.0px;background:#111"></div>
<div class="a" style="left:632.5px;top:657.5px;width:10.0px;height:8.0px;background:#050505"></div>
<div class="sec" style="top:756.7px"></div>
<svg style="left:358.0px;top:762.5px" width="7" height="8" viewBox="0 0 7 8"><path d="M.5 .3 V7.7 L6.3 4 Z" fill="#8c8c8c"/></svg>
<div class="t b" style="left:393.4px;top:761.0px;letter-spacing:-0.34px;word-spacing:0.5px;color:#1d1d1d">FLOOR PLAN AND SECTION</div>
<div class="sec" style="top:780.8px"></div>
<svg style="left:358.0px;top:786.5px" width="7" height="8" viewBox="0 0 7 8"><path d="M.5 .3 V7.7 L6.3 4 Z" fill="#8c8c8c"/></svg>
<div class="t b" style="left:393.4px;top:785.0px;letter-spacing:-0.29px;word-spacing:0.5px;color:#1d1d1d">DIMENSION MARKER</div>
<div class="sec sec2" style="top:804.8px"></div>
<svg style="left:358.0px;top:810.6px" width="7" height="8" viewBox="0 0 7 8"><path d="M.5 .3 V7.7 L6.3 4 Z" fill="#c4c4c4"/></svg>
<div class="t b" style="left:393.4px;top:809.0px;letter-spacing:-0.39px;word-spacing:0.5px;color:#b0b0b0">MARKER TEXT STYLE</div>
<div class="sec sec2" style="top:828.9px"></div>
<svg style="left:358.0px;top:834.6px" width="7" height="8" viewBox="0 0 7 8"><path d="M.5 .3 V7.7 L6.3 4 Z" fill="#c4c4c4"/></svg>
<div class="t b" style="left:393.4px;top:833.0px;letter-spacing:-0.30px;word-spacing:0.5px;color:#b0b0b0">MARKER CUSTOM SETTINGS</div>
<div class="sec" style="top:852.9px"></div>
<svg style="left:358.0px;top:858.7px" width="7" height="8" viewBox="0 0 7 8"><path d="M.5 .3 V7.7 L6.3 4 Z" fill="#8c8c8c"/></svg>
<div class="t b" style="left:393.4px;top:857.0px;letter-spacing:-0.26px;word-spacing:0.5px;color:#1d1d1d">CLASSIFICATION AND PROPERTIES</div>
<div class="a" style="left:352.0px;top:883.3px;width:428.0px;height:1.0px;background:#d9d9d9"></div>
<div class="a" style="left:611.0px;top:892.5px;width:79.0px;height:18.5px;background:#fff;border-radius:4.5px;box-shadow:0 0 0 .5px #d4d4d4,0 .5px 1.5px rgba(0,0,0,.2)"></div>
<div class="t" style="left:634.2px;top:897.0px;letter-spacing:0.02px;color:#222">Cancel</div>
<div class="a" style="left:700.5px;top:892.5px;width:78.5px;height:18.5px;background:#fff;border-radius:4.5px;box-shadow:0 0 0 .5px #d4d4d4,0 .5px 1.5px rgba(0,0,0,.2)"></div>
<div class="t" style="left:733.0px;top:897.0px;letter-spacing:-0.76px;color:#222">OK</div>
<!-- popup tree -->
<div class="a" style="left:780.5px;top:920.0px;width:89.5px;height:9.0px;background:linear-gradient(90deg,rgba(0,0,0,.14) 0,rgba(0,0,0,.13) 14px,rgba(0,0,0,.07) 40px,rgba(0,0,0,0) 80px)"></div>
<div class="a" style="left:780.5px;top:442.5px;width:207.5px;height:477.5px;background:#fff;box-shadow:0 0 0 .5px rgba(0,0,0,.2),0 1px 3px rgba(0,0,0,.12)"></div>
<div class="a" style="left:975.0px;top:442.5px;width:13.0px;height:465.0px;background:#fafafa;box-shadow:-1px 0 0 #ebebeb"></div>
<div class="a" style="left:978.8px;top:445.8px;width:6.8px;height:413.2px;background:#c1c1c1;border-radius:3.5px"></div>
<div class="a" style="left:780.5px;top:907.5px;width:207.5px;height:12.5px;background:#fafafa;box-shadow:0 -1px 0 #ebebeb"></div>
<div class="a" style="left:783.6px;top:910.0px;width:178.0px;height:7.3px;background:#c1c1c1;border-radius:3.6px"></div>
<div class="a" style="left:0;top:0;width:975px;height:907.5px;overflow:hidden"><div class="t" style="left:817.3px;top:448.0px;letter-spacing:0.06px;word-spacing:0.5px;color:#1d1d1d">Modulmått och Ställplats</div>
<div class="t" style="left:817.3px;top:470.0px;letter-spacing:0.01px;word-spacing:0.5px;color:#1d1d1d">Inställningar Dörr och Öppning</div>
<div class="t" style="left:829.8px;top:491.0px;letter-spacing:0.00px;word-spacing:0.5px;color:#1d1d1d">Dörrkarm och Dörrblad</div>
<div class="t" style="left:842.3px;top:513.0px;letter-spacing:0.08px;word-spacing:0.5px;color:#1d1d1d">Naturlig Ventilation</div>
<div class="t" style="left:829.8px;top:534.0px;letter-spacing:0.04px;word-spacing:0.5px;color:#1d1d1d">Typ Dörrblad</div>
<div class="t" style="left:842.3px;top:555.0px;letter-spacing:0.00px;word-spacing:0.5px;color:#1d1d1d">Handtag och Sparkplåt</div>
<div class="t" style="left:829.8px;top:577.0px;letter-spacing:0.09px;word-spacing:0.5px;color:#1d1d1d">Öppningstyp och -vinkel</div>
<div class="a" style="left:780.5px;top:592.9px;width:194.5px;height:21.4px;background:#0a5ad2"></div>
<div class="t" style="left:842.3px;top:598.0px;letter-spacing:0.02px;color:#fff">Öppningslinjer</div>
<div class="t" style="left:829.8px;top:620.0px;letter-spacing:0.15px;word-spacing:0.5px;color:#1d1d1d">Attribut Modell</div>
<div class="t" style="left:817.3px;top:641.0px;letter-spacing:-0.06px;color:#1d1d1d">Väggöppning</div>
<div class="t" style="left:829.8px;top:662.0px;letter-spacing:-0.10px;word-spacing:0.5px;color:#1d1d1d">Indragen Smyg</div>
<div class="t" style="left:829.8px;top:684.0px;letter-spacing:-0.05px;color:#1d1d1d">Väggavslut</div>
<div class="t" style="left:829.8px;top:705.0px;letter-spacing:0.06px;color:#1d1d1d">Murverksbalk</div>
<div class="t" style="left:829.8px;top:727.0px;letter-spacing:0.15px;word-spacing:0.5px;color:#1d1d1d">Attribut Modell</div>
<div class="t" style="left:817.3px;top:748.0px;letter-spacing:-0.05px;word-spacing:0.5px;color:#1d1d1d">Fixturer och Beslag</div>
<div class="t" style="left:829.8px;top:769.0px;letter-spacing:-0.03px;color:#1d1d1d">Tröskel</div>
<div class="t" style="left:829.8px;top:791.0px;letter-spacing:-0.05px;color:#1d1d1d">Bleck</div>
<div class="t" style="left:829.8px;top:812.0px;letter-spacing:-0.04px;word-spacing:0.5px;color:#1d1d1d">Foder Utsida</div>
<div class="t" style="left:829.8px;top:834.0px;letter-spacing:-0.11px;word-spacing:0.5px;color:#1d1d1d">Foder Insida</div>
<div class="t" style="left:829.8px;top:855.0px;letter-spacing:-0.03px;color:#1d1d1d">Solskydd</div>
<div class="t" style="left:829.8px;top:876.0px;letter-spacing:0.15px;word-spacing:0.5px;color:#1d1d1d">Attribut Modell</div>
<div class="t" style="left:817.3px;top:898.0px;letter-spacing:-0.10px;word-spacing:0.5px;color:#1d1d1d">Plan och Sektion</div>
</div>
<!-- icons -->
<svg style="left:0;top:0" width="999" height="929" viewBox="0 0 999 929" fill="none" stroke-linecap="butt">
<path d="M372.8 78.2 L376 75.4 H384 L380.8 78.2 Z" stroke="#2b3a42" stroke-width="0.9" fill="#c5cacd" stroke-linejoin="round"/>
<path d="M380.8 78.2 L384 75.4 V84.4 L380.8 87 Z" stroke="#2b3a42" stroke-width="0.9" fill="#56636a" stroke-linejoin="round"/>
<path d="M372.8 78.2 H380.8 V87 H378.3 V80.8 H375.3 V87 H372.8 Z" stroke="#2b3a42" stroke-width="0.9" fill="#8a949a" stroke-linejoin="round"/>
<path d="M375.3 80.8 L376.6 79.9 H378.3" stroke="#2b3a42" stroke-width="0.7" fill="none" />
<path d="M381.0 96.5 L383.5 97.6 V117.4 L381.0 115.6 Z" stroke="#2b3a42" stroke-width="1" fill="#8a949a" stroke-linejoin="round"/>
<path d="M381.0 96.5 H399.0 L400.5 97.6 H383.5 Z" stroke="#2b3a42" stroke-width="1" fill="#8a949a" stroke-linejoin="round"/>
<rect x="383.50" y="97.60" width="17.00" height="19.80" rx="0.6" stroke="#2b3a42" stroke-width="1.1" fill="#f7f7f7"/>
<rect x="386.50" y="101.50" width="10.80" height="13.80" rx="0" stroke="#2b3a42" stroke-width="1.1" fill="#8a949a"/>
<rect x="386.50" y="101.50" width="8.80" height="11.80" rx="0" stroke="#2b3a42" stroke-width="0.9" fill="#f2f2f2"/>
<path d="M386.8 121.5 H396.4" stroke="#2b3a42" stroke-width="1" fill="none" />
<path d="M385.8 121.5 L388.8 119.5 L388.8 123.5 Z M397.4 121.5 L394.4 119.5 L394.4 123.5 Z" stroke="none" stroke-width="0" fill="#2b3a42" />
<path d="M381.0 131.4 L383.5 132.5 V152.3 L381.0 150.5 Z" stroke="#2b3a42" stroke-width="1" fill="#8a949a" stroke-linejoin="round"/>
<path d="M381.0 131.4 H399.0 L400.5 132.5 H383.5 Z" stroke="#2b3a42" stroke-width="1" fill="#8a949a" stroke-linejoin="round"/>
<rect x="383.50" y="132.50" width="17.00" height="19.80" rx="0.6" stroke="#2b3a42" stroke-width="1.1" fill="#f7f7f7"/>
<rect x="386.50" y="136.40" width="10.80" height="13.80" rx="0" stroke="#2b3a42" stroke-width="1.1" fill="#8a949a"/>
<rect x="386.50" y="136.40" width="8.80" height="11.80" rx="0" stroke="#2b3a42" stroke-width="0.9" fill="#f2f2f2"/>
<path d="M407.8 136.6 V149.6" stroke="#2b3a42" stroke-width="1" fill="none" />
<path d="M407.8 135.6 L405.8 138.6 L409.8 138.6 Z M407.8 150.6 L405.8 147.6 L409.8 147.6 Z" stroke="none" stroke-width="0" fill="#2b3a42" />
<path d="M401.4 135.8 H406.5 M401.4 150.4 H406.5" stroke="#2b3a42" stroke-width="0.9" fill="none" stroke-dasharray="1.2 1.2"/>
<path d="M380.8 199.3 L383.3 200.4 V223.4 L380.8 221.6 Z" stroke="#2b3a42" stroke-width="1" fill="#8a949a" stroke-linejoin="round"/>
<path d="M380.8 199.3 H399.0 L400.5 200.4 H383.3 Z" stroke="#2b3a42" stroke-width="1" fill="#8a949a" stroke-linejoin="round"/>
<rect x="383.30" y="200.40" width="17.40" height="23.00" rx="0.6" stroke="#2b3a42" stroke-width="1.1" fill="#f7f7f7"/>
<rect x="386.10" y="203.00" width="11.30" height="14.00" rx="0" stroke="#2b3a42" stroke-width="1.1" fill="#8a949a"/>
<rect x="386.10" y="203.00" width="9.30" height="12.00" rx="0" stroke="#2b3a42" stroke-width="0.9" fill="#f2f2f2"/>
<path d="M384 219 H407 M401.6 223.8 H407" stroke="#2b3a42" stroke-width="0.9" fill="none" stroke-dasharray="1.2 1.2"/>
<path d="M396 219 L399.2 219 L399.2 216.4 Z" stroke="none" stroke-width="0" fill="#2b3a42" />
<path d="M407.9 215.2 V218.0" stroke="#2b3a42" stroke-width="1" fill="none" />
<path d="M407.9 219.0 L405.9 216.4 L409.9 216.4 Z" stroke="none" stroke-width="0" fill="#2b3a42" />
<path d="M407.9 225.0 V222.0" stroke="#2b3a42" stroke-width="1" fill="none" />
<path d="M407.9 221.0 L405.9 223.6 L409.9 223.6 Z" stroke="none" stroke-width="0" fill="#2b3a42" />
<clipPath id="c3800_2572"><rect x="380.00" y="257.20" width="4.60" height="12.60"/></clipPath>
<path d="M367.40 269.80 L380.00 257.20 M370.44 269.80 L383.05 257.20 M373.49 269.80 L386.09 257.20 M376.54 269.80 L389.14 257.20 M379.58 269.80 L392.18 257.20 M382.63 269.80 L395.23 257.20 " stroke="#2b3a42" stroke-width="1" clip-path="url(#c3800_2572)"/>
<clipPath id="c3968_2572"><rect x="396.80" y="257.20" width="4.80" height="12.60"/></clipPath>
<path d="M384.20 269.80 L396.80 257.20 M387.25 269.80 L399.85 257.20 M390.29 269.80 L402.89 257.20 M393.34 269.80 L405.94 257.20 M396.38 269.80 L408.98 257.20 M399.43 269.80 L412.03 257.20 " stroke="#2b3a42" stroke-width="1" clip-path="url(#c3968_2572)"/>
<path d="M384.6 262.4 H396.8 M384.6 264.4 H396.8" stroke="#2b3a42" stroke-width="0.9" fill="none" />
<path d="M380 257.2 H384.6 M396.8 257.2 H401.6" stroke="#2b3a42" stroke-width="1" fill="none" />
<path d="M385 257.2 H396.6 M402 257.2 H405.4 M402 263.4 H405.4" stroke="#2b3a42" stroke-width="0.9" fill="none" stroke-dasharray="1.2 1.2"/>
<path d="M407.8 252.4 V256.6" stroke="#2b3a42" stroke-width="1" fill="none" />
<path d="M407.8 257.6 L405.8 255.0 L409.8 255.0 Z" stroke="none" stroke-width="0" fill="#2b3a42" />
<path d="M407.8 267.6 V263.2" stroke="#2b3a42" stroke-width="1" fill="none" />
<path d="M407.8 262.2 L405.8 264.8 L409.8 264.8 Z" stroke="none" stroke-width="0" fill="#2b3a42" />
<rect x="430.90" y="285.80" width="5.40" height="6.20" rx="0" stroke="none" stroke-width="0" fill="#22303a"/>
<path d="M431.5 290.8 L435.5 287.0" stroke="#fff" stroke-width="1.3" fill="none" />
<path d="M439.8 286.0 H443.0 M441.4 284.4 V287.6" stroke="#55626a" stroke-width="0.9" fill="none" />
<rect x="445.90" y="285.80" width="5.60" height="6.20" rx="0" stroke="none" stroke-width="0" fill="#22303a"/>
<path d="M446.5 290.8 L450.7 287.0" stroke="#fff" stroke-width="1.3" fill="none" />
<rect x="457.60" y="286.20" width="7.00" height="6.00" rx="0" stroke="none" stroke-width="0" fill="#22303a"/>
<path d="M458.2 291.0 L463.8 287.4" stroke="#fff" stroke-width="1.3" fill="none" />
<path d="M460.2 291.6 L464 287.2" stroke="#fff" stroke-width="1.1" fill="none" />
<path d="M463.4 285.2 H466.6 M465.0 283.6 V286.8" stroke="#55626a" stroke-width="0.9" fill="none" />
<rect x="472.70" y="285.80" width="5.50" height="6.20" rx="0" stroke="none" stroke-width="0" fill="#22303a"/>
<path d="M473.3 290.8 L477.4 287.0" stroke="#fff" stroke-width="1.3" fill="none" />
<rect x="484.00" y="285.80" width="5.70" height="6.20" rx="0" stroke="none" stroke-width="0" fill="#22303a"/>
<path d="M484.6 290.8 L488.9 287.0" stroke="#fff" stroke-width="1.3" fill="none" />
<rect x="499.00" y="286.20" width="6.20" height="6.00" rx="0" stroke="none" stroke-width="0" fill="#22303a"/>
<path d="M499.6 291.0 L504.4 287.4" stroke="#fff" stroke-width="1.3" fill="none" />
<path d="M496.8 284.8 H500.0 M498.4 283.2 V286.4" stroke="#55626a" stroke-width="0.9" fill="none" />
<path d="M566.8 109.7 Q569.3 109.7 569.3 111.6 V113.8 Q569.3 115.8 566.8 115.8 M582.8 109.7 Q580.4 109.7 580.4 111.6 V113.8 Q580.4 115.8 582.8 115.8" stroke="#2b3a42" stroke-width="1.2" fill="none" />
<rect x="569.40" y="111.50" width="10.90" height="2.20" rx="0" stroke="#2b3a42" stroke-width="1" fill="#f4f4f4"/>
<path d="M570.6 111.4 L577.8 105.8" stroke="#2b3a42" stroke-width="1.2" fill="none" />
<path d="M578 105.4 V111.4" stroke="#2b3a42" stroke-width="1.5" fill="none" />
<path d="M574.4 111 L577.2 108.6 V111 Z" stroke="none" stroke-width="0" fill="#7b858b" />
<path d="M570.4 115.7 H579.6" stroke="#e2e2e6" stroke-width="0.8" fill="none" />
<rect x="570.30" y="126.30" width="7.90" height="10.70" rx="1.2" stroke="#2b3a42" stroke-width="1" fill="#fafafa"/>
<path d="M575.2 131.6 H577" stroke="#2b3a42" stroke-width="1" fill="none" />
<path d="M574.8 145.6 L580.2 148.4 V154.6 L574.8 157.4 L569.4 154.6 V148.4 Z" stroke="#2b3a42" stroke-width="1" fill="#fff" stroke-linejoin="round"/>
<path d="M574.8 151.2 L580.2 148.4 V154.6 L574.8 157.4 Z" stroke="#2b3a42" stroke-width="0.8" fill="#2b3a42" stroke-linejoin="round"/>
<path d="M574.8 151.2 L569.4 148.4 V154.6 L574.8 157.4 Z" stroke="#2b3a42" stroke-width="0.8" fill="#8a949a" stroke-linejoin="round"/>
<path d="M568.8 165.8 V179.2 M580 165.8 V179.2" stroke="#2b3a42" stroke-width="2.6" fill="none" stroke-dasharray="1.6 .9"/>
<path d="M567.4 165.8 V179.2 M581.4 165.8 V179.2" stroke="#2b3a42" stroke-width="0.8" fill="none" />
<path d="M570 167.6 H579 M570 177.6 H579 M571.6 171 H577.6 M571.6 174 H577.6" stroke="#2b3a42" stroke-width="1" fill="none" />
<circle cx="574.8" cy="195" r="6.4" stroke="#2b3a42" stroke-width="1" fill="#f6f6f6"/>
<path d="M574.8 193.6 V198.6" stroke="#2b3a42" stroke-width="1.5" fill="none" />
<circle cx="574.8" cy="191.3" r=".95" fill="#2b3a42"/>
<path d="M610.4 389.4 V413.2 Q599 410 599 401.4 Q599 392.6 610.4 389.4 Z" stroke="#55626a" stroke-width="0.9" fill="#f6f6f6" />
<clipPath id="c5936_3992"><rect x="593.60" y="399.20" width="4.20" height="4.60"/></clipPath>
<path d="M589.00 403.80 L593.60 399.20 M591.61 403.80 L596.21 399.20 M594.22 403.80 L598.82 399.20 M596.83 403.80 L601.43 399.20 " stroke="#2b3a42" stroke-width="0.9" clip-path="url(#c5936_3992)"/>
<rect x="593.60" y="399.20" width="4.20" height="4.60" rx="0" stroke="#2b3a42" stroke-width="0.8" fill="none"/>
<clipPath id="c6112_3992"><rect x="611.20" y="399.20" width="4.20" height="4.60"/></clipPath>
<path d="M606.60 403.80 L611.20 399.20 M609.21 403.80 L613.81 399.20 M611.82 403.80 L616.42 399.20 M614.43 403.80 L619.03 399.20 " stroke="#2b3a42" stroke-width="0.9" clip-path="url(#c6112_3992)"/>
<rect x="611.20" y="399.20" width="4.20" height="4.60" rx="0" stroke="#2b3a42" stroke-width="0.8" fill="none"/>
<path d="M598.4 401.5 H610.6" stroke="#2b3a42" stroke-width="0.8" fill="none" stroke-dasharray="1.2 1.2"/>
<path d="M621.8 397.2 Q618.2 398.6 619.4 402 M619.2 406.4 Q623.4 405 622 401" stroke="#2b3a42" stroke-width="1.1" fill="none" />
<path d="M620.6 395.4 L623.2 397 L620.8 399 Z M620.4 408 L617.8 406.4 L620.2 404.6 Z" stroke="none" stroke-width="0" fill="#2b3a42" />
<path d="M730.4 409.6 H749.0" stroke="#2b3a42" stroke-width="1" fill="none" />
<path d="M735.4 409 L739.0 396 H744.8 L743.0 409" stroke="#2b3a42" stroke-width="1" fill="#f4f4f4" />
<path d="M739.0 409 L741.4 397.4 M738.8 397.6 H744.4" stroke="#2b3a42" stroke-width="1.3" fill="none" />
<path d="M757.0 409.6 H775.6" stroke="#2b3a42" stroke-width="1" fill="none" />
<path d="M762.0 409 L765.6 396 H771.4 L769.6 409" stroke="#2b3a42" stroke-width="1" fill="#f4f4f4" />
<path d="M765.6 409 L768.0 397.4 M765.4 397.6 H771.0" stroke="#2b3a42" stroke-width="1.3" fill="none" />
<rect x="371.40" y="421.60" width="8.60" height="9.00" rx="0" stroke="#2b3a42" stroke-width="1" fill="none"/>
<path d="M373.2 423.4 L378.2 428.8 M378.2 423.4 L373.2 428.8" stroke="#2b3a42" stroke-width="1" fill="none" />
<path d="M382.0 422.2 h1.6 M382.0 425.4 h1.6" stroke="#2b3a42" stroke-width="1.6" fill="none" />
<path d="M371.6 433.4 h1.6 M375.0 433.4 h1.6" stroke="#2b3a42" stroke-width="1.6" fill="none" />
<rect x="378.40" y="427.40" width="8.40" height="7.20" rx="1" stroke="#2b3a42" stroke-width="1" fill="#e4e4e4"/>
<path d="M378.4 429.3 H386.8" stroke="#2b3a42" stroke-width="1.2" fill="none" />
<rect x="381.80" y="430.80" width="3.40" height="2.20" rx="0" stroke="#2b3a42" stroke-width="0.7" fill="#9aa3a8"/>
<path d="M409.4 450.4 Q409.4 449.4 410.4 449.4 H416.6 Q417.4 449.4 417.4 450.4 V456.4 L414.6 459.4 H410.4 Q409.4 459.4 409.4 458.4 Z" stroke="#2b3a42" stroke-width="1" fill="#fff" stroke-linejoin="round"/>
<path d="M411 451.5 H416 M411 453.5 H416 M411 455.5 H416 M411 457.5 H413.8" stroke="#2b3a42" stroke-width="0.8" fill="none" />
<path d="M417.2 454.6 Q421.2 453.6 421.2 448.4" stroke="#1a73f0" stroke-width="1.7" fill="none" />
<path d="M418.6 449.6 L421.2 446.2 L423.8 449.6" stroke="#1a73f0" stroke-width="1.5" fill="none" stroke-linejoin="round" stroke-linecap="round"/>
<rect x="442.00" y="446.90" width="6.90" height="11.90" rx="0" stroke="#9a9a9a" stroke-width="0.6" fill="#fff"/>
<path d="M448.6 447.4 L443.2 452.9 L448.6 458.4" stroke="#2b3a42" stroke-width="1.1" fill="none" />
<path d="M371.2 763 H378.6 M371.2 771 H378.6 M371.2 763 L373.4 767 L371.2 771" stroke="#2b3a42" stroke-width="1" fill="none" stroke-linejoin="round"/>
<rect x="378.60" y="761.90" width="4.40" height="4.70" rx="0" stroke="#2b3a42" stroke-width="1" fill="#f4f4f4"/>
<path d="M380.8 766.6 V771.4 M378.6 771 H387 M383 763 H387 M383 765.8 H387 M383.6 768.4 H387" stroke="#2b3a42" stroke-width="1" fill="none" />
<circle cx="378.4" cy="784.9" r="1.5" stroke="#2b3a42" stroke-width="1" fill="#f4f4f4"/>
<path d="M378.4 786.4 V796" stroke="#2b3a42" stroke-width="1" fill="none" />
<path d="M378.4 798 L376.8 795.2 H380 Z" stroke="none" stroke-width="0" fill="#2b3a42" />
<path d="M371 791.6 H387" stroke="#2b3a42" stroke-width="0.9" fill="none" />
<clipPath id="c3716_7896"><rect x="371.60" y="789.60" width="3.20" height="4.00"/></clipPath>
<path d="M367.60 793.60 L371.60 789.60 M369.92 793.60 L373.92 789.60 M372.24 793.60 L376.24 789.60 M374.56 793.60 L378.56 789.60 " stroke="#2b3a42" stroke-width="0.9" clip-path="url(#c3716_7896)"/>
<rect x="371.60" y="789.60" width="3.20" height="4.00" rx="0" stroke="#2b3a42" stroke-width="0.8" fill="none"/>
<clipPath id="c3830_7896"><rect x="383.00" y="789.60" width="3.40" height="4.00"/></clipPath>
<path d="M379.00 793.60 L383.00 789.60 M381.32 793.60 L385.32 789.60 M383.64 793.60 L387.64 789.60 M385.96 793.60 L389.96 789.60 " stroke="#2b3a42" stroke-width="0.9" clip-path="url(#c3830_7896)"/>
<rect x="383.00" y="789.60" width="3.40" height="4.00" rx="0" stroke="#2b3a42" stroke-width="0.8" fill="none"/>
<path d="M375 791 L377.6 788.4" stroke="#2b3a42" stroke-width="0.9" fill="none" />
<path d="M371.4 813.4 V821.6" stroke="#a9afb2" stroke-width="1" fill="none" stroke-dasharray="1.2 1"/>
<path d="M371.4 811.8 l-1.4 2.2 h2.8 Z M371.4 823 l-1.4 -2.2 h2.8 Z" stroke="none" stroke-width="0" fill="#a9afb2" />
<path d="M373.6 822 L377.8 811.8 L382 822 M375.2 818.4 H380.4" stroke="#a9afb2" stroke-width="1.1" fill="none" stroke-linejoin="round"/>
<path d="M382.4 808.4 V814 Q382.4 817.2 384.6 817.2 Q386.8 817.2 386.8 814 V808.4 M384.6 817.2 V819.4" stroke="#a9afb2" stroke-width="1" fill="none" />
<rect x="371.40" y="831.80" width="8.60" height="9.00" rx="0" stroke="#a9afb2" stroke-width="1" fill="none"/>
<path d="M373.2 833.6 L378.2 839.0 M378.2 833.6 L373.2 839.0" stroke="#a9afb2" stroke-width="1" fill="none" />
<path d="M382.0 832.4 h1.6 M382.0 835.6 h1.6" stroke="#a9afb2" stroke-width="1.6" fill="none" />
<path d="M371.6 843.6 h1.6 M375.0 843.6 h1.6" stroke="#a9afb2" stroke-width="1.6" fill="none" />
<rect x="378.40" y="837.60" width="8.40" height="7.20" rx="1" stroke="#a9afb2" stroke-width="1" fill="#e4e4e4"/>
<path d="M378.4 839.5 H386.8" stroke="#a9afb2" stroke-width="1.2" fill="none" />
<rect x="381.80" y="841.00" width="3.40" height="2.20" rx="0" stroke="#a9afb2" stroke-width="0.7" fill="#a9afb2"/>
<rect x="373.30" y="856.20" width="10.60" height="12.80" rx="1.4" stroke="#2b3a42" stroke-width="1.1" fill="#f6f6f6"/>
<path d="M375.4 859 H381.4 M375.4 861.2 H379.6 M375.4 863.4 H381.4 M375.4 865.4 H381.4 M375.4 867 H381.4" stroke="#2b3a42" stroke-width="0.9" fill="none" />
<rect x="799.60" y="447.90" width="6.60" height="11.60" rx="1.2" stroke="#2b3a42" stroke-width="1" fill="#fff"/>
<path d="M802 453.5 h1.4" stroke="#2b3a42" stroke-width="0.9" fill="none" />
<path d="M810.2 449.3 V458.3" stroke="#2b3a42" stroke-width="1" fill="none" />
<path d="M810.2 447.7 l-1.8 2.6 h3.6 Z M810.2 459.7 l-1.8 -2.6 h3.6 Z" stroke="none" stroke-width="0" fill="#2b3a42" />
<path d="M784.9 473.8 L787.9 477.0 L790.9 473.8" stroke="#555" stroke-width="1.2" fill="none" stroke-linecap="round" stroke-linejoin="round"/>
<rect x="802.10" y="469.49" width="6.90" height="11.40" rx="1.2" stroke="#2b3a42" stroke-width="1" fill="#fff"/>
<path d="M804 475.1 h1.4" stroke="#2b3a42" stroke-width="0.9" fill="none" />
<path d="M797.2 495.1 L800.2 498.3 L803.2 495.1" stroke="#555" stroke-width="1.2" fill="none" stroke-linecap="round" stroke-linejoin="round"/>
<clipPath id="c8101_4910"><rect x="810.10" y="491.08" width="5.80" height="9.80"/></clipPath>
<path d="M800.30 500.88 L810.10 491.08 M803.20 500.88 L813.00 491.08 M806.10 500.88 L815.90 491.08 M809.00 500.88 L818.80 491.08 M811.90 500.88 L821.70 491.08 M814.80 500.88 L824.60 491.08 " stroke="#b9bec1" stroke-width="0.9" clip-path="url(#c8101_4910)"/>
<path d="M815.9 492.1 H825.9 M819.7 495.5 H825.9" stroke="#7b858b" stroke-width="1" fill="none" />
<rect x="815.70" y="491.88" width="4.20" height="5.00" rx="0" stroke="#2b3a42" stroke-width="1.1" fill="#fff"/>
<clipPath id="c8256_5106"><rect x="825.60" y="510.67" width="10.00" height="6.60"/></clipPath>
<path d="M819.00 517.27 L825.60 510.67 M822.48 517.27 L829.08 510.67 M825.96 517.27 L832.56 510.67 M829.44 517.27 L836.04 510.67 M832.92 517.27 L839.52 510.67 " stroke="#b9bec1" stroke-width="0.9" clip-path="url(#c8256_5106)"/>
<path d="M827.6 517.5 V525.5 M831 517.5 V525.5 M827.6 522.1 H831" stroke="#7b858b" stroke-width="1" fill="none" />
<path d="M823.2 520.7 Q828 516.9 831 518.9 Q834 520.5 837.4 518.5" stroke="#2b3a42" stroke-width="1" fill="none" />
<path d="M835 516.9 L837.8 518.3 L836.6 521.1" stroke="#2b3a42" stroke-width="1" fill="none" stroke-linejoin="round"/>
<path d="M797.2 537.9 L800.2 541.1 L803.2 537.9" stroke="#555" stroke-width="1.2" fill="none" stroke-linecap="round" stroke-linejoin="round"/>
<rect x="814.40" y="533.66" width="7.10" height="11.40" rx="1.4" stroke="#2b3a42" stroke-width="1" fill="#fff"/>
<rect x="817.00" y="536.26" width="2.00" height="3.60" rx="0.5" stroke="#2b3a42" stroke-width="0.9" fill="#dfe3e5"/>
<path d="M828 554.6 Q825.2 554.6 825.2 557.5 V564.9 Q825.2 567.6 828 567.6 Q830.6 567.6 830.6 564.9 V561.1" stroke="#2b3a42" stroke-width="1" fill="#fff" />
<path d="M828 554.6 Q830.6 554.6 830.6 557.5 H836 Q837 557.5 837 559.1 Q837 561.1 836 561.1 H828.4" stroke="#2b3a42" stroke-width="1" fill="#fff" />
<path d="M797.2 580.6 L800.2 583.8 L803.2 580.6" stroke="#555" stroke-width="1.2" fill="none" stroke-linecap="round" stroke-linejoin="round"/>
<path d="M810.2 583.8 H826 M811.6 585.6 H824.6" stroke="#9aa3a8" stroke-width="1" fill="none" />
<path d="M812 585.4 L818.6 578.2 L825.6 585.8" stroke="#2b3a42" stroke-width="1.1" fill="none" stroke-linejoin="round"/>
<rect x="827.30" y="597.43" width="6.50" height="11.80" rx="0" stroke="#8e8e8e" stroke-width="0.6" fill="#fff"/>
<path d="M833.5 597.8 L828.2 603.3 L833.5 608.8" stroke="#2b3a42" stroke-width="1.1" fill="none" />
<rect x="816.70" y="617.22" width="2.80" height="5.40" rx="0.6" stroke="#2b3a42" stroke-width="1" fill="#fff"/>
<rect x="812.90" y="622.62" width="10.80" height="4.40" rx="0.8" stroke="#2b3a42" stroke-width="1" fill="#fff"/>
<path d="M812.9 627.0 L810.7 632.0 H823.7 V627.0" stroke="#2b3a42" stroke-width="1" fill="#fff" stroke-linejoin="round"/>
<path d="M811.7 631.8 l1.4 -2.4 M814.1 631.8 l1.4 -2.4 M816.5 631.8 l1.4 -2.4 M818.9 631.8 l1.4 -2.4 M821.3 631.8 l1.4 -2.4" stroke="#2b3a42" stroke-width="0.9" fill="none" />
<path d="M784.9 644.9 L787.9 648.1 L790.9 644.9" stroke="#555" stroke-width="1.2" fill="none" stroke-linecap="round" stroke-linejoin="round"/>
<path d="M799 651.6 V640.6 Q799 639.6 800 639.6 H811 Q812 639.6 812 640.6 V651.6 Q812 652.6 811 652.6 H808.4 V643.0 H802.6 V652.6 H800 Q799 652.6 799 651.6 Z" stroke="#2b3a42" stroke-width="1" fill="#f1f2f3" stroke-linejoin="round"/>
<clipPath id="c8101_6618"><rect x="810.10" y="661.80" width="6.00" height="10.40"/></clipPath>
<path d="M799.70 672.20 L810.10 661.80 M802.60 672.20 L813.00 661.80 M805.50 672.20 L815.90 661.80 M808.40 672.20 L818.80 661.80 M811.30 672.20 L821.70 661.80 M814.20 672.20 L824.60 661.80 " stroke="#2b3a42" stroke-width="1" clip-path="url(#c8101_6618)"/>
<path d="M810.1 661.6 H819.5 V665.8" stroke="#2b3a42" stroke-width="1.2" fill="none" />
<path d="M816.5 666.0 H825.9 M816.5 669.2 H825.9 M820.7 666.0 V669.2" stroke="#b9bec1" stroke-width="1" fill="none" />
<path d="M810.5 682.2 H820.5 V686.8 H816.5" stroke="#2b3a42" stroke-width="1.1" fill="none" />
<path d="M810.5 684.2 H818.5 M810.5 686.0 H816.5" stroke="#66727a" stroke-width="1" fill="none" />
<clipPath id="c8105_6867"><rect x="810.50" y="686.79" width="5.60" height="8.60"/></clipPath>
<path d="M801.90 695.39 L810.50 686.79 M804.80 695.39 L813.40 686.79 M807.70 695.39 L816.30 686.79 M810.60 695.39 L819.20 686.79 M813.50 695.39 L822.10 686.79 " stroke="#b9bec1" stroke-width="0.9" clip-path="url(#c8105_6867)"/>
<path d="M816.5 689.2 H825.9 M816.5 692.2 H825.9 M820.9 689.2 V692.2" stroke="#b9bec1" stroke-width="1" fill="none" />
<path d="M810.6 709.4 L813.6 707.2 L815.2 711.6 L812.4 713.6 Z" stroke="#2b3a42" stroke-width="1" fill="#fff" stroke-linejoin="round"/>
<path d="M814.2 707.0 L817.8 706.2 L818 710.8 L815.4 711.4 Z" stroke="#2b3a42" stroke-width="1" fill="#fff" stroke-linejoin="round"/>
<path d="M818.4 706.2 L822 707.0 L820.8 711.4 L818.2 710.8 Z" stroke="#2b3a42" stroke-width="1" fill="#fff" stroke-linejoin="round"/>
<path d="M822.6 707.2 L825.6 709.4 L823.8 713.6 L821 711.6 Z" stroke="#2b3a42" stroke-width="1" fill="#fff" stroke-linejoin="round"/>
<rect x="816.70" y="724.17" width="2.80" height="5.40" rx="0.6" stroke="#2b3a42" stroke-width="1" fill="#fff"/>
<rect x="812.90" y="729.57" width="10.80" height="4.40" rx="0.8" stroke="#2b3a42" stroke-width="1" fill="#fff"/>
<path d="M812.9 734.0 L810.7 739.0 H823.7 V734.0" stroke="#2b3a42" stroke-width="1" fill="#fff" stroke-linejoin="round"/>
<path d="M811.7 738.8 l1.4 -2.4 M814.1 738.8 l1.4 -2.4 M816.5 738.8 l1.4 -2.4 M818.9 738.8 l1.4 -2.4 M821.3 738.8 l1.4 -2.4" stroke="#2b3a42" stroke-width="0.9" fill="none" />
<path d="M784.9 751.9 L787.9 755.1 L790.9 751.9" stroke="#555" stroke-width="1.2" fill="none" stroke-linecap="round" stroke-linejoin="round"/>
<rect x="799.40" y="747.36" width="12.20" height="11.80" rx="1.4" stroke="#2b3a42" stroke-width="1" fill="#fff"/>
<path d="M805.4 747.4 V759.2" stroke="#2b3a42" stroke-width="1" fill="none" />
<path d="M806 749.4 H811 M806 751.4 H811 M806 753.4 H811 M806 755.4 H811 M806 757.4 H811" stroke="#6f7a80" stroke-width="1" fill="none" />
<path d="M808.6 747.8 V758.8" stroke="#8a949a" stroke-width="0.8" fill="none" />
<path d="M813.9 768.1 V779.1 M817.7 768.1 V779.1" stroke="#6f7a80" stroke-width="1" fill="none" />
<rect x="810.80" y="779.15" width="12.80" height="2.60" rx="0" stroke="#2b3a42" stroke-width="1" fill="#c9cfd2"/>
<path d="M814 788.5 V797.3 M817.7 788.5 V797.3" stroke="#8a949a" stroke-width="1" fill="none" />
<clipPath id="c8136_7997"><rect x="813.60" y="799.74" width="9.40" height="4.80"/></clipPath>
<path d="M808.80 804.54 L813.60 799.74 M811.99 804.54 L816.79 799.74 M815.18 804.54 L819.98 799.74 M818.37 804.54 L823.17 799.74 M821.56 804.54 L826.36 799.74 " stroke="#b9bec1" stroke-width="0.9" clip-path="url(#c8136_7997)"/>
<path d="M811 797.5 H824.2 V799.7 H814" stroke="#2b3a42" stroke-width="1" fill="none" />
<rect x="810.80" y="796.74" width="2.80" height="2.40" rx="0" stroke="#2b3a42" stroke-width="0.9" fill="#fff"/>
<clipPath id="c8102_8109"><rect x="810.20" y="810.93" width="5.60" height="12.40"/></clipPath>
<path d="M797.80 823.33 L810.20 810.93 M800.70 823.33 L813.10 810.93 M803.60 823.33 L816.00 810.93 M806.50 823.33 L818.90 810.93 M809.40 823.33 L821.80 810.93 M812.30 823.33 L824.70 810.93 M815.20 823.33 L827.60 810.93 " stroke="#b9bec1" stroke-width="0.9" clip-path="url(#c8102_8109)"/>
<path d="M812.6 810.7 H817.6 V813.7" stroke="#2b3a42" stroke-width="1.3" fill="none" />
<path d="M817.6 813.7 V823.3 M817.6 813.3 H825.8 M817.6 816.7 H825.8" stroke="#6f7a80" stroke-width="1" fill="none" />
<clipPath id="c8102_8319"><rect x="810.20" y="831.92" width="5.60" height="10.00"/></clipPath>
<path d="M800.20 841.92 L810.20 831.92 M803.10 841.92 L813.10 831.92 M806.00 841.92 L816.00 831.92 M808.90 841.92 L818.90 831.92 M811.80 841.92 L821.80 831.92 M814.70 841.92 L824.70 831.92 " stroke="#b9bec1" stroke-width="0.9" clip-path="url(#c8102_8319)"/>
<path d="M817.6 831.9 V837.9 M817.6 834.7 H825.8 M817.6 838.1 H825.8" stroke="#8a949a" stroke-width="1" fill="none" />
<path d="M817.6 837.9 V844.9 H812.2" stroke="#2b3a42" stroke-width="1.3" fill="none" />
<path d="M815.6 839.9 V843.5" stroke="#2b3a42" stroke-width="1" fill="none" />
<rect x="812.30" y="853.91" width="11.10" height="12.60" rx="1.6" stroke="#2b3a42" stroke-width="1" fill="#a3abb0"/>
<rect x="815.00" y="856.31" width="5.60" height="7.80" rx="0" stroke="#2b3a42" stroke-width="0.9" fill="#d8dcde"/>
<path d="M815 858.3 H820.6 M815 860.3 H820.6 M815 862.3 H820.6" stroke="#2b3a42" stroke-width="0.8" fill="none" />
<rect x="816.70" y="873.90" width="2.80" height="5.40" rx="0.6" stroke="#2b3a42" stroke-width="1" fill="#fff"/>
<rect x="812.90" y="879.30" width="10.80" height="4.40" rx="0.8" stroke="#2b3a42" stroke-width="1" fill="#fff"/>
<path d="M812.9 883.7 L810.7 888.7 H823.7 V883.7" stroke="#2b3a42" stroke-width="1" fill="#fff" stroke-linejoin="round"/>
<path d="M811.7 888.5 l1.4 -2.4 M814.1 888.5 l1.4 -2.4 M816.5 888.5 l1.4 -2.4 M818.9 888.5 l1.4 -2.4 M821.3 888.5 l1.4 -2.4" stroke="#2b3a42" stroke-width="0.9" fill="none" />
<path d="M802.5 895 V907.5 M808.1 895 V907.5" stroke="#2b3a42" stroke-width="1" fill="none" />
<path d="M15.4 896.2 L22.2 892.2 L29 896.2 Z" stroke="#2b3a42" stroke-width="1" fill="#fff" stroke-linejoin="round"/>
<path d="M17.6 897 V902.4 M20.6 897 V902.4 M23.8 897 V902.4 M26.8 897 V900" stroke="#2b3a42" stroke-width="1.4" fill="none" />
<path d="M15.8 903.6 H22.6" stroke="#2b3a42" stroke-width="1.4" fill="none" />
<rect x="22.40" y="900.40" width="8.80" height="7.40" rx="1.4" stroke="none" stroke-width="0" fill="#3b82f6"/>
<rect x="24.00" y="903.20" width="5.60" height="3.00" rx="0.3" stroke="none" stroke-width="0" fill="#dbe8ff"/>
<path d="M25.4 904 v1.6 M27 904 v1.6 M28.4 904 v1.6" stroke="#3b82f6" stroke-width="0.6" fill="none" />
<path d="M32 896.6 L34.6 899.2 L32 901.8" stroke="#222" stroke-width="1.3" fill="none" stroke-linecap="round" stroke-linejoin="round"/>
</svg>
</body>
</html>
